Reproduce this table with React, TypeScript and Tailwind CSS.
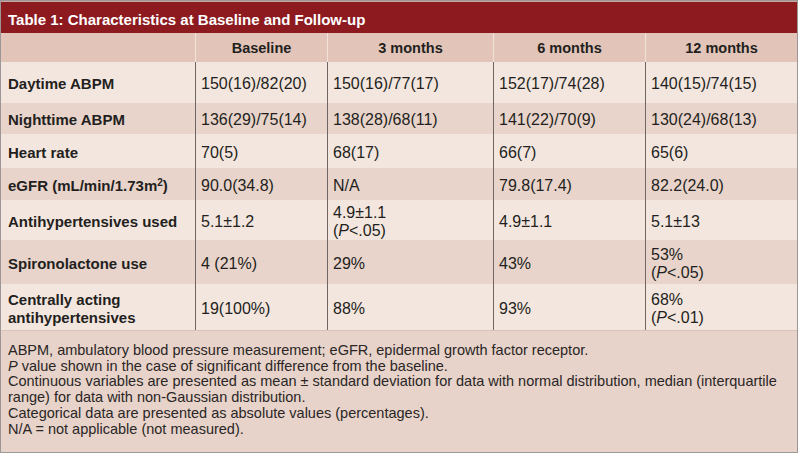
const COLS = 'grid grid-cols-[194px_132px_166px_152px_152px]';

type Row = { label: React.ReactNode; cells: React.ReactNode[]; h: string; bg: string };

const LIGHT = 'bg-[#f3e6df]';
const DARK = 'bg-[#e8d4cb]';

const P = (v: string) => (
  <>
    (<i>P</i>&lt;{v})
  </>
);

const ROWS: Row[] = [
  { label: 'Daytime ABPM', cells: ['150(16)/82(20)', '150(16)/77(17)', '152(17)/74(28)', '140(15)/74(15)'], h: 'h-[41px]', bg: LIGHT },
  { label: 'Nighttime ABPM', cells: ['136(29)/75(14)', '138(28)/68(11)', '141(22)/70(9)', '130(24)/68(13)'], h: 'h-[31px]', bg: DARK },
  { label: 'Heart rate', cells: ['70(5)', '68(17)', '66(7)', '65(6)'], h: 'h-[34px]', bg: LIGHT },
  {
    label: (
      <span className="font-normal">
        <span className="font-bold">eGFR</span> <span className="font-bold">(mL/min/1.73m<sup className="text-[10px]">2</sup>)</span>
      </span>
    ),
    cells: ['90.0(34.8)', 'N/A', '79.8(17.4)', '82.2(24.0)'],
    h: 'h-[32px]',
    bg: DARK,
  },
  {
    label: 'Antihypertensives used',
    cells: ['5.1±1.2', <>4.9±1.1<br />{P('.05')}</>, '4.9±1.1', '5.1±13'],
    h: 'h-[40px]',
    bg: LIGHT,
  },
  {
    label: 'Spironolactone use',
    cells: ['4 (21%)', '29%', '43%', <>53%<br />{P('.05')}</>],
    h: 'h-[44px]',
    bg: DARK,
  },
  {
    label: <>Centrally acting<br />antihypertensives</>,
    cells: ['19(100%)', '88%', '93%', <>68%<br />{P('.01')}</>],
    h: 'h-[46px]',
    bg: LIGHT,
  },
];

export default function App() {
  return (
    <div className="w-[800px] h-[456px] bg-white font-['Liberation_Sans',Arial,sans-serif] text-[#231f20]">
      <div className="w-[798px] h-[453px] border border-[#9c9696] flex flex-col">
        <div className="h-[32px] bg-[#8d1a1f] border-t border-[#c9a7a4] pl-[7px] pt-[8px] text-[15px] font-bold text-white leading-[20px]">
          Table 1: Characteristics at Baseline and Follow-up
        </div>

        <div className={`${COLS} h-[29px] bg-[#e2c5b8] text-[14.5px] font-bold`}>
          <div />
          {['Baseline', '3 months', '6 months', '12 months'].map((c) => (
            <div key={c} className="border-l border-[#f1e2da] flex items-center justify-center pt-[3px]">
              {c}
            </div>
          ))}
        </div>

        {ROWS.map((r, i) => (
          <div key={i} className={`${COLS} ${r.h} ${r.bg} leading-[18px]`}>
            <div className="flex items-center pl-[7px] pt-[3px] text-[15px] font-bold">{r.label}</div>
            {r.cells.map((c, j) => (
              <div key={j} className="border-l border-[#6f6664] flex items-center pl-[5px] pt-[3px] text-[16px]">
                <div>{c}</div>
              </div>
            ))}
          </div>
        ))}

        <div className="flex-1 bg-[#e7d3c9] border-t border-[#d9c3b9] pl-[7px] pt-[12px] text-[14.5px] leading-[15.7px] text-[#2a2626] whitespace-nowrap">
          ABPM, ambulatory blood pressure measurement; eGFR, epidermal growth factor receptor.
          <br />
          <i>P</i> value shown in the case of significant difference from the baseline.
          <br />
          Continuous variables are presented as mean ± standard deviation for data with normal distribution, median (interquartile
          <br />
          range) for data with non-Gaussian distribution.
          <br />
          Categorical data are presented as absolute values (percentages).
          <br />
          N/A = not applicable (not measured).
        </div>
      </div>
    </div>
  );
}
